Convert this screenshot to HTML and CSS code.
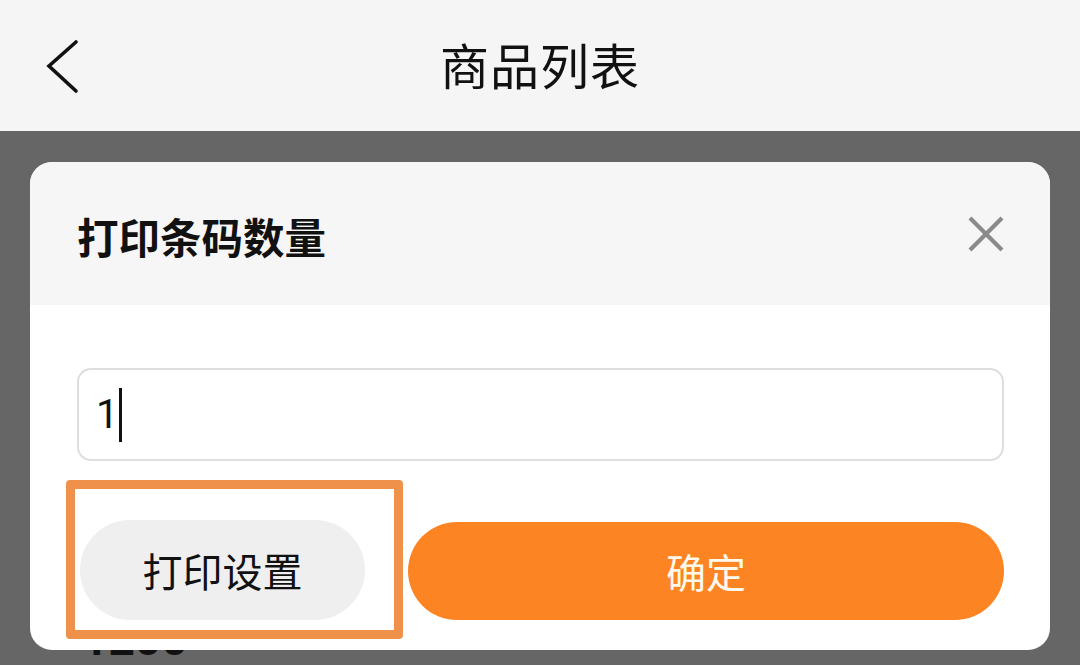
FILE: index.html
```html
<!DOCTYPE html>
<html lang="zh-CN">
<head>
<meta charset="utf-8">
<title>商品列表</title>
<link rel="stylesheet" href="styles.css">
</head>
<body>
<header class="topbar">
  <div class="back">
    <svg width="40" height="56" viewBox="0 0 40 56"><path d="M30 3 L3 27 L30 52" fill="none" stroke="#111" stroke-width="3.6" stroke-linecap="round" stroke-linejoin="miter"/></svg>
  </div>
  <h1 class="page-title">商品列表</h1>
  <div></div>
</header>
<main class="backdrop">
  <div class="under-text">1200</div>
  <section class="dialog">
    <div class="dialog-head">
      <h2 class="dialog-title">打印条码数量</h2>
      <svg class="close" width="36" height="36" viewBox="0 0 36 36"><path d="M2 2 L34 34 M34 2 L2 34" stroke="#8a8a8a" stroke-width="4.2" stroke-linecap="butt"/></svg>
    </div>
    <div class="dialog-body">
      <div class="field"><span class="value">1</span><span class="caret"></span></div>
      <div class="actions">
        <div class="setting-wrap"><button class="btn btn-gray">打印设置</button></div>
        <button class="btn btn-orange">确定</button>
      </div>
    </div>
  </section>
</main>
</body>
</html>
```
FILE: styles.css
```css
*, *::before, *::after { box-sizing: border-box; }
html, body { margin: 0; padding: 0; }
body {
  width: 1080px;
  height: 665px;
  overflow: hidden;
  font-family: "Noto Sans CJK SC", "Noto Sans", sans-serif;
  background: #666666;
}
.topbar {
  height: 131px;
  background: #f5f5f5;
  display: grid;
  grid-template-columns: 1fr auto 1fr;
  align-items: center;
}
.back {
  padding-left: 46px;
  padding-top: 2px;
  display: flex;
  align-items: center;
}
.page-title {
  margin: 0 0 4px;
  font-size: 49px;
  font-weight: 400;
  color: #111;
  line-height: 1;
  letter-spacing: 1px;
}
.backdrop {
  position: relative;
  height: 534px;
  background: #666666;
  padding: 31px 30px 0;
}
.under-text {
  position: absolute;
  left: 82px;
  top: 485px;
  font-size: 46px;
  font-weight: 700;
  color: #111;
  line-height: 1;
  font-family: "Roboto", "Noto Sans", sans-serif;
}
.dialog {
  position: relative;
  height: 488px;
  background: #ffffff;
  border-radius: 22px;
  overflow: hidden;
}
.dialog-head {
  height: 143px;
  background: #f6f6f6;
  display: flex;
  align-items: center;
  justify-content: space-between;
  padding: 0 46px 0 47px;
}
.dialog-title {
  margin: 0;
  padding-top: 6px;
  font-size: 41.5px;
  font-weight: 700;
  color: #111;
  line-height: 1;
}
.dialog-body {
  padding: 63px 46px 0 47px;
}
.field {
  height: 93px;
  border: 2px solid #dedede;
  border-radius: 14px;
  display: flex;
  align-items: center;
  padding-left: 17px;
}
.value {
  font-size: 40px;
  color: #111;
  line-height: 1;
  font-family: "Roboto", "Noto Sans", sans-serif;
}
.caret {
  width: 3px;
  height: 54px;
  background: #111;
  margin-left: 1px;
}
.actions {
  display: flex;
  gap: 43px;
  margin-top: 59px;
  padding-left: 3px;
}
.setting-wrap {
  position: relative;
  width: 285px;
  flex: none;
}
.setting-wrap::after {
  content: "";
  position: absolute;
  left: -14px;
  top: -40px;
  width: 337px;
  height: 159px;
  border: 9px solid #f0914b;
  border-radius: 4px;
}
.btn {
  height: 100px;
  border: none;
  border-radius: 50px;
  font-family: "Noto Sans CJK SC", "Noto Sans", sans-serif;
  font-size: 40px;
  line-height: 1;
  padding: 0;
  display: flex;
  align-items: center;
  justify-content: center;
}
.btn-gray {
  width: 285px;
  background: #efefef;
  color: #111;
}
.btn-orange {
  width: 597px;
  background: #fc8422;
  color: #fff9ec;
  margin-top: 2px;
  height: 98px;
}
```
